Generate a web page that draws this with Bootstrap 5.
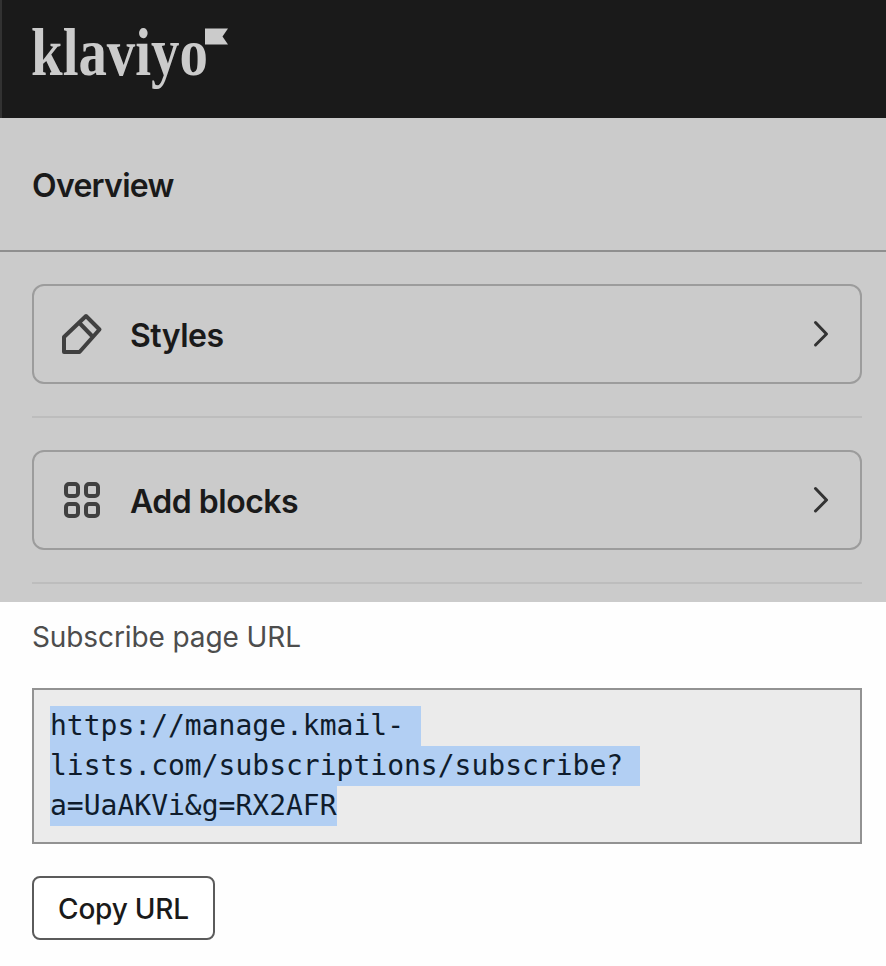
<!DOCTYPE html>
<html lang="en">
<head>
<meta charset="utf-8">
<meta name="viewport" content="width=device-width, initial-scale=1">
<title>Klaviyo – Overview</title>
<link href="https://cdn.jsdelivr.net/npm/bootstrap@5.3.0/dist/css/bootstrap.min.css" rel="stylesheet">
<style>
  body { font-family: Inter, "Liberation Sans", sans-serif; color: #1a1a1a; background: #fefefe; overflow: hidden; }
  .brand-bar { height: 118px; background: #1a1a1a; border-left: 2px solid #323232; padding-left: 29px; }
  .brand-logo { display: block; }
  .page-head { height: 134px; border-bottom: 2px solid #8f8f8f; padding: 3px 32px 0; }
  .dimmed { background: #cbcbcb; height: 484px; }
  .page-title { font-size: 32px; font-weight: 600; line-height: 40px; letter-spacing: -.7px; }
  .side-pad { padding-left: 32px; padding-right: 24px; }
  .menu-list { padding-top: 32px; }
  .menu-item { height: 100px; border: 2px solid #9c9c9c; border-radius: 12px; padding: 0 24px 0 26px; color: #1a1a1a; background: transparent; font-size: 32px; font-weight: 600; }
  .menu-item svg { flex: none; }
  .menu-label { margin-left: 26px; padding-top: 3px; letter-spacing: -.5px; }
  .rule { height: 2px; background: #bdbdbd; margin: 32px 0; }
  .url-label { font-size: 28px; line-height: 40px; color: #4d4d4d; margin-bottom: 31px; padding-top: 15px; letter-spacing: -.1px; }
  .url-box { height: 156px; border: 2px solid #929292; background: #ebebeb; padding: 16px; font-family: "DejaVu Sans Mono", monospace; font-size: 28px; line-height: 40px; color: #0f1c2c; }
  .picked { display: block; width: max-content; height: 40px; background: #b2cff3; }
  .picked-nl { padding-right: 1ch; }
  .copy-btn { width: 183px; height: 64px; border: 2px solid #5b5b5b; border-radius: 8px; background: #fff; font-size: 28px; font-weight: 500; line-height: 40px; margin-top: 32px; color: #1a1a1a; padding: 1px 0 0; letter-spacing: -.2px; }
</style>
<script src="https://cdn.jsdelivr.net/npm/bootstrap@5.3.0/dist/js/bootstrap.bundle.min.js"></script>
</head>
<body>
<header class="brand-bar">
  <svg class="brand-logo" width="220" height="118" viewBox="31 0 220 118" role="img" aria-label="klaviyo">
    <text x="31" y="75" textLength="177" lengthAdjust="spacingAndGlyphs" font-family="Liberation Serif, serif" font-size="67" font-weight="700" fill="#cbcbcb">klaviyo</text>
    <path d="M205 28.5H228L222.500 36.500L228 44.500H205Z" fill="#cbcbcb"/>
  </svg>
</header>
<main>
  <div class="dimmed">
    <div class="page-head d-flex align-items-center"><h1 class="page-title m-0"><span>Overview</span></h1></div>
    <nav class="side-pad menu-list">
      <button type="button" class="menu-item w-100 d-flex align-items-center">
        <svg width="44" height="44" viewBox="0 0 44 44" fill="none" stroke="#404040" stroke-width="4" stroke-linejoin="round"><path d="M4 40V25L26 4L39.500 17.500L19.500 40ZM19 10.500L32.500 24.500"/></svg>
        <span class="menu-label">Styles</span>
        <svg class="ms-auto" width="30" height="30" viewBox="0 0 30 30" fill="none" stroke="#333" stroke-width="3" stroke-linecap="round" stroke-linejoin="round"><path d="M9.500 3.500L20.500 15L9.500 26"/></svg>
      </button>
      <div class="rule"></div>
      <button type="button" class="menu-item w-100 d-flex align-items-center">
        <svg width="44" height="44" viewBox="0 0 44 44" fill="none" stroke="#404040" stroke-width="4"><rect x="6" y="6" width="12" height="12" rx="3"/><rect x="26" y="6" width="12" height="12" rx="3"/><rect x="6" y="26" width="12" height="12" rx="3"/><rect x="26" y="26" width="12" height="12" rx="3"/></svg>
        <span class="menu-label">Add blocks</span>
        <svg class="ms-auto" width="30" height="30" viewBox="0 0 30 30" fill="none" stroke="#333" stroke-width="3" stroke-linecap="round" stroke-linejoin="round"><path d="M9.500 3.500L20.500 15L9.500 26"/></svg>
      </button>
      <div class="rule mb-0"></div>
    </nav>
  </div>
  <section class="side-pad">
    <div class="url-label"><span>Subscribe page URL</span></div>
    <div class="url-box"><span class="picked picked-nl">https://manage.kmail-</span><span class="picked picked-nl">lists.com/subscriptions/subscribe?</span><span class="picked">a=UaAKVi&amp;g=RX2AFR</span></div>
    <button type="button" class="btn copy-btn">Copy URL</button>
  </section>
</main>
</body>
</html>
